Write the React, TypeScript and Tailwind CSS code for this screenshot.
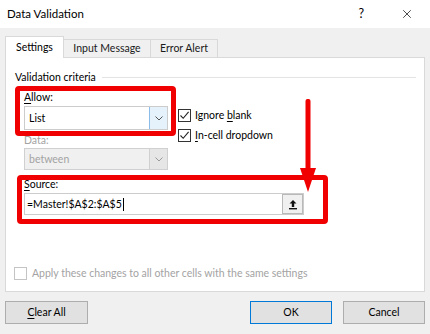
import { X } from 'lucide-react';

function Check({ checked, disabled }: { checked?: boolean; disabled?: boolean }) {
  return (
    <div
      className={`w-[13px] h-[13px] bg-white border flex items-center justify-center ${disabled ? 'border-[#c4c4c4]' : 'border-[#333333]'}`}
    >
      {checked && (
        <svg width="11" height="11" viewBox="0 0 11 11">
          <path d="M1.5 5.5 L4.2 8.3 L9.6 1.8" fill="none" stroke="#222" strokeWidth="1.1" />
        </svg>
      )}
    </div>
  );
}

function Chevron({ color }: { color: string }) {
  return (
    <svg width="8" height="5" viewBox="0 0 8 5">
      <path d="M0.5 0.5 L4 4 L7.5 0.5" fill="none" stroke={color} strokeWidth="1" />
    </svg>
  );
}

export default function App() {
  return (
    <div className="relative w-[430px] h-[334px] overflow-hidden bg-[#f0f0f0] text-[10.5px] text-black font-['Lato',sans-serif] leading-none">
      {/* title bar */}
      <div className="h-[28px] bg-white flex items-center pl-[7px] pr-[16px]">
        <span className="text-[11.5px]">Data Validation</span>
        <span className="ml-auto mr-[36px] text-[12.5px]">?</span>
        <X size={14} strokeWidth={1.2} />
      </div>

      {/* tabs */}
      <div className="flex items-end pl-[5px] h-[30px] -mb-px relative z-10">
        <div className="w-[59px] h-[22px] bg-white border border-b-0 border-[#d9d9d9] flex items-center justify-center">Settings</div>
        <div className="w-[87px] h-[19px] border border-l-0 border-[#d9d9d9] flex items-center justify-center text-[#1a1a1a]">Input Message</div>
        <div className="w-[67px] h-[19px] border border-l-0 border-[#d9d9d9] flex items-center justify-center text-[#1a1a1a]">Error Alert</div>
      </div>

      {/* panel */}
      <div className="mx-[5px] h-[235px] bg-white border border-[#d9d9d9] flex flex-col">
        <div className="flex items-center pl-[9px] pr-[8px] mt-[11px] h-[16px]">
          <span>Validation criteria</span>
          <div className="flex-1 h-px bg-[#e3e3e3] ml-[6px]" />
        </div>

        <div className="flex pl-[18px] mt-[4px]">
          <div className="w-[144px] flex flex-col">
            <div className="h-[16px] flex items-center"><span><span className="underline underline-offset-2">A</span>llow:</span></div>
            <div className="mt-[1px] h-[24px] flex border border-[#cccccc] bg-white">
              <div className="flex-1 flex items-center pl-[4px]">List</div>
              <div className="w-[18px] bg-[#e5f1fb] border-l border-[#8cbcea] flex items-center justify-center">
                <Chevron color="#555" />
              </div>
            </div>
            <div className="mt-[2px] h-[16px] flex items-center text-[#a3a3a3]">Data:</div>
            <div className="h-[22px] flex border border-[#d0d0d0] bg-[#f0f0f0] text-[#a3a3a3]">
              <div className="flex-1 flex items-center pl-[4px]">between</div>
              <div className="w-[18px] bg-[#e6e6e6] border-l border-[#d0d0d0] flex items-center justify-center">
                <Chevron color="#9a9a9a" />
              </div>
            </div>
          </div>
          <div className="ml-[10px] pt-[20px] flex flex-col gap-[7px]">
            <div className="flex items-center gap-[4px]">
              <Check checked />
              <span>Ignore <span className="underline underline-offset-2">b</span>lank</span>
            </div>
            <div className="flex items-center gap-[4px]">
              <Check checked />
              <span><span className="underline underline-offset-2">I</span>n-cell dropdown</span>
            </div>
          </div>
        </div>

        <div className="pl-[18px] mt-[6px] flex flex-col">
          <div className="h-[16px] flex items-center"><span><span className="underline underline-offset-2">S</span>ource:</span></div>
          <div className="mt-[1px] w-[280px] h-[22px] flex items-center border border-[#cccccc] bg-white">
            <div className="flex-1 flex items-center pl-[2px]">
              <span>=Master!$A$2:$A$5</span>
              <span className="w-px h-[13px] bg-black ml-[1px]" />
            </div>
            <div className="w-[21px] h-[20px] bg-[#f0f0f0] border border-[#b9b9b9] flex items-center justify-center">
              <svg width="10" height="11" viewBox="0 0 10 11">
                <path d="M5 1 L1.5 4.5 H3.8 V8 H6.2 V4.5 H8.5 Z" fill="#111" />
                <rect x="1" y="9" width="8" height="1.4" fill="#111" />
              </svg>
            </div>
          </div>
        </div>

        <div className="mt-[52px] pl-[8px] flex items-center gap-[5px] text-[#a3a3a3]">
          <Check disabled />
          <span>Apply these changes to all other cells with the same settings</span>
        </div>
      </div>

      {/* buttons */}
      <div className="flex mt-[9px] px-[5px]">
        <button className="w-[83px] h-[23px] bg-[#e1e1e1] border border-[#adadad] flex items-center justify-center">
          <span><span className="underline underline-offset-2">C</span>lear All</span>
        </button>
        <button className="ml-auto w-[82px] h-[23px] bg-[#e1e1e1] border border-[#0078d7] flex items-center justify-center">OK</button>
        <button className="ml-[11px] w-[82px] h-[23px] bg-[#e1e1e1] border border-[#adadad] flex items-center justify-center">Cancel</button>
      </div>

      {/* red annotations */}
      <div className="absolute left-[15px] top-[86px] w-[161px] h-[50px] border-[5px] border-[#f00000] rounded-[4px]" />
      <div className="absolute left-[17px] top-[175px] w-[311px] h-[49px] border-[5px] border-[#f00000] rounded-[4px]" />
      <svg className="absolute left-[298px] top-[98px]" width="20" height="96" viewBox="0 0 20 96">
        <rect x="7.5" y="1" width="5" height="72" rx="2" fill="#f00000" />
        <path d="M2 70 L18 70 L10 94 Z" fill="#f00000" />
      </svg>
    </div>
  );
}
